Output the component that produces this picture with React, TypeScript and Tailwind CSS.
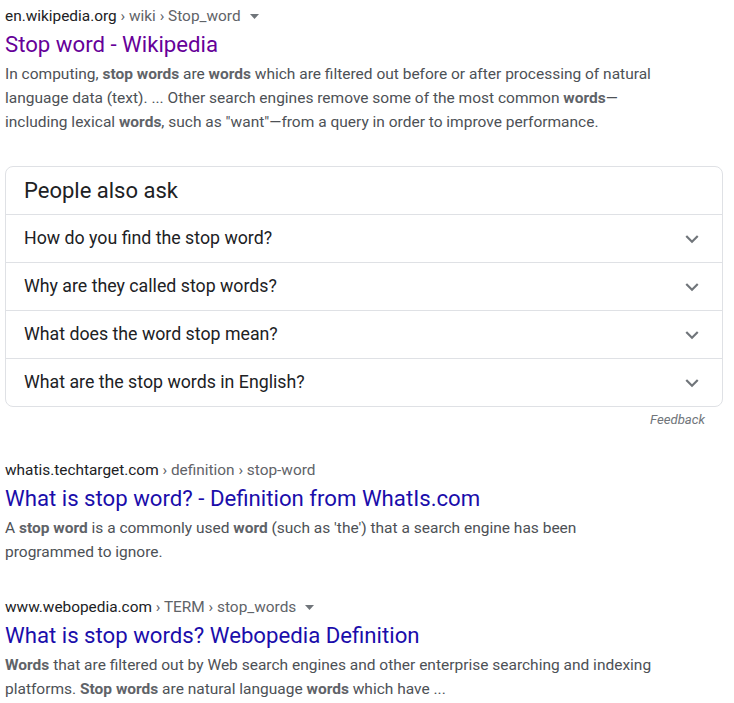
import React from 'react';

interface Result {
    site: string;
    path: string[];
    menu: boolean;
    title: string;
    visited?: boolean;
    snippet: React.ReactNode;
}

const results: Result[] = [
    {
        site: 'whatis.techtarget.com',
        path: ['definition', 'stop-word'],
        menu: false,
        title: 'What is stop word? - Definition from WhatIs.com',
        snippet: (
            <>
                A <b>stop word</b> is a commonly used <b>word</b> (such as 'the') that a search engine has been
                <br />
                programmed to ignore.
            </>
        ),
    },
    {
        site: 'www.webopedia.com',
        path: ['TERM', 'stop_words'],
        menu: true,
        title: 'What is stop words? Webopedia Definition',
        snippet: (
            <>
                <b>Words</b> that are filtered out by Web search engines and other enterprise searching and indexing
                <br />
                platforms. <b>Stop words</b> are natural language <b>words</b> which have ...
            </>
        ),
    },
];

const questions = [
    'How do you find the stop word?',
    'Why are they called stop words?',
    'What does the word stop mean?',
    'What are the stop words in English?',
];

function Caret() {
    return (
        <svg width="9" height="5" viewBox="0 0 9 5" className="ml-[9px] mt-[1px]">
            <path d="M0 0h9L4.5 5z" fill="#70757a" />
        </svg>
    );
}

function Chevron() {
    return (
        <svg width="26" height="26" viewBox="0 0 24 24">
            <path d="M16.59 8.59L12 13.17 7.41 8.59 6 10l6 6 6-6z" fill="#70757a" />
        </svg>
    );
}

function SearchResult({ site, path, menu, title, visited, snippet }: Result) {
    return (
        <div className="w-[700px]">
            <div className="flex items-center h-[20px] text-[15.4px] leading-[20px]">
                <span className="text-[#202124]">{site}</span>
                <span className="text-[#5f6368] whitespace-pre">{path.map((p) => ` › ${p}`).join('')}</span>
                {menu && <Caret />}
            </div>
            <h3 className={`mt-[4px] text-[22.2px] leading-[28px] ${visited ? 'text-[#660099]' : 'text-[#1a0dab]'}`}>
                {title}
            </h3>
            <div className="mt-[4px] text-[15.5px] leading-[24px] text-[#4d5156] [&_b]:text-[#5f6368] [&_b]:font-bold">
                {snippet}
            </div>
        </div>
    );
}

export default function App() {
    return (
        <div className="bg-white min-h-[703px] pl-[5px] pr-[11px] pt-[6px] font-['Roboto',Arial,sans-serif]">
            <SearchResult
                site="en.wikipedia.org"
                path={['wiki', 'Stop_word']}
                menu={true}
                visited={true}
                title="Stop word - Wikipedia"
                snippet={
                    <>
                        In computing, <b>stop words</b> are <b>words</b> which are filtered out before or after processing of natural
                        <br />
                        language data (text). ... Other search engines remove some of the most common <b>words</b>—
                        <br />
                        including lexical <b>words</b>, such as "want"—from a query in order to improve performance.
                    </>
                }
            />

            {/* People also ask */}
            <div className="mt-[32px] border border-[#dfe1e5] rounded-[8px]">
                <div className="h-[47px] flex items-center pb-[1px] px-[18px] text-[22px] text-[#202124]">
                    People also ask
                </div>
                {questions.map((q) => (
                    <div
                        key={q}
                        className="h-[48px] border-t border-[#dfe1e5] flex items-center justify-between pl-[18px] pr-[17px] text-[17.75px] text-[#202124]"
                    >
                        <span>{q}</span>
                        <Chevron />
                    </div>
                ))}
            </div>
            <div className="h-[24px] leading-[24px] mt-[1px] text-right pr-[18px] text-[13.2px] italic text-[#70757a]">
                Feedback
            </div>

            <div className="mt-[28px] flex flex-col gap-[33px]">
                {results.map((r) => (
                    <SearchResult key={r.site} {...r} />
                ))}
            </div>
        </div>
    );
}
